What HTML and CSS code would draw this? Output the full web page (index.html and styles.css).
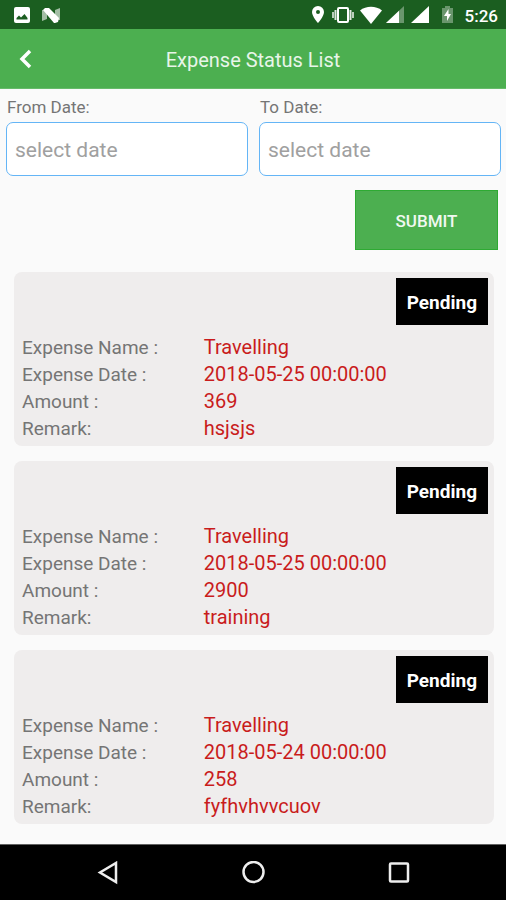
FILE: index.html
```html
<!DOCTYPE html>
<html lang="en">
<head>
<meta charset="utf-8">
<meta name="viewport" content="width=device-width, initial-scale=1">
<title>Expense Status List</title>
<link rel="stylesheet" href="styles.css">
</head>
<body>
<div class="status-bar">
  <div class="status-group">
    <svg width="16" height="16" viewBox="0 0 16 16"><rect width="16" height="16" rx="2" fill="#fff"/><path d="M2.500 12.500V11L5 8.500 7 10.500 10.500 7 13.500 11v1.500z" fill="#1b5e20"/></svg>
    <svg class="logo-n" width="18" height="16" viewBox="0 0 18 16"><path d="M0 3h5v9l-5 2zM18 1v12h-5V3z" fill="#fff" opacity=".6"/><path d="M1 3L3 1h4l10 10-1 4-3 1h-1z" fill="#fff"/></svg>
  </div>
  <div class="status-group status-right">
    <svg width="12" height="17" viewBox="0 0 12 17"><path fill="#fff" fill-rule="evenodd" d="M6 0a6 6 0 0 0-6 6c0 4.500 6 11 6 11s6-6.500 6-11a6 6 0 0 0-6-6zm0 4a2 2 0 1 1 0 4 2 2 0 0 1 0-4z"/></svg>
    <svg class="vibrate" width="22" height="18" viewBox="0 0 22 18" fill="none" stroke="#fff"><rect x="6" y="2" width="10" height="14" rx="1" stroke-width="2"/><path d="M3.500 4v10M18.500 4v10" stroke-width="2" opacity=".85"/><path d="M1 6v6M21 6v6" stroke-width="2" opacity=".7"/></svg>
    <svg class="wifi" width="22" height="18" viewBox="0 0 22 18"><path fill="#fff" d="M0 4.500C6-.5 16-.5 22 4.500L11 18z"/></svg>
    <svg class="signal" width="18" height="17" viewBox="0 0 18 17"><path d="M0 17L18 0v17z" fill="#fff" opacity=".35"/><path d="M0 17L13 4.700V17z" fill="#fff"/></svg>
    <svg class="signal-full" width="18" height="17" viewBox="0 0 18 17"><path d="M0 17L18 0v17z" fill="#fff"/></svg>
    <svg class="battery" width="11" height="17" viewBox="0 0 11 17"><path d="M3 0h5v2h3v15H0V2h3z" fill="#fff" opacity=".35"/><path d="M6.500 3L2 10h3v5l4-7H6.500z" fill="#fff"/></svg>
    <span class="clock">5:26</span>
  </div>
</div>
<header class="app-bar">
  <button class="back" type="button" aria-label="Back"><svg width="14" height="20" viewBox="0 0 14 20"><path d="M11 2L3 10l8 8" fill="none" stroke="#fff" stroke-width="3.500"/></svg></button>
  <h1>Expense Status List</h1>
</header>
<main>
  <form>
    <div class="fields">
      <div class="field"><label for="from">From Date:</label><input id="from" type="text" placeholder="select date"></div>
      <div class="field"><label for="to">To Date:</label><input id="to" type="text" placeholder="select date"></div>
    </div>
    <button class="submit" type="button">SUBMIT</button>
  </form>
  <section class="cards">
    <article class="card">
      <span class="badge">Pending</span>
      <dl>
        <dt>Expense Name :</dt><dd>Travelling</dd>
        <dt>Expense Date :</dt><dd>2018-05-25 00:00:00</dd>
        <dt>Amount :</dt><dd>369</dd>
        <dt>Remark:</dt><dd>hsjsjs</dd>
      </dl>
    </article>
    <article class="card">
      <span class="badge">Pending</span>
      <dl>
        <dt>Expense Name :</dt><dd>Travelling</dd>
        <dt>Expense Date :</dt><dd>2018-05-25 00:00:00</dd>
        <dt>Amount :</dt><dd>2900</dd>
        <dt>Remark:</dt><dd>training</dd>
      </dl>
    </article>
    <article class="card">
      <span class="badge">Pending</span>
      <dl>
        <dt>Expense Name :</dt><dd>Travelling</dd>
        <dt>Expense Date :</dt><dd>2018-05-24 00:00:00</dd>
        <dt>Amount :</dt><dd>258</dd>
        <dt>Remark:</dt><dd>fyfhvhvvcuov</dd>
      </dl>
    </article>
  </section>
</main>
<nav class="nav-bar">
  <button type="button" aria-label="Back"><svg width="24" height="24" viewBox="0 0 24 24"><path d="M21 2v19L5 11.500z"/></svg></button>
  <button type="button" aria-label="Home"><svg width="24" height="24" viewBox="0 0 24 24"><circle cx="12.500" cy="11" r="10"/></svg></button>
  <button type="button" aria-label="Recent apps"><svg width="24" height="24" viewBox="0 0 24 24"><rect x="3" y="2.500" width="18" height="18" rx="1"/></svg></button>
</nav>
</body>
</html>
```
FILE: styles.css
```css
* {
  box-sizing: border-box;
}

body {
  margin: 0;
  min-height: 100vh;
  display: flex;
  flex-direction: column;
  background: #fafafa;
  color: #757575;
  font-family: Roboto, "Liberation Sans", sans-serif;
}

svg {
  display: block;
}

button {
  border: 0;
  padding: 0;
  background: none;
  font-family: inherit;
}

.status-bar {
  display: flex;
  justify-content: space-between;
  align-items: center;
  height: 29px;
  padding: 0 8px 0 14px;
  background: #1b5e20;
  color: #fff;
}

.status-group {
  display: flex;
  align-items: center;
}

.logo-n {
  margin-left: 12px;
}

.vibrate {
  margin-left: 8px;
}

.wifi {
  margin-left: 6px;
}

.signal {
  margin-left: 4px;
}

.signal-full {
  margin-left: 7px;
}

.battery {
  margin-left: 13px;
}

.clock {
  margin-left: 12px;
  padding-top: 3px;
  font-size: 17px;
  font-weight: 500;
  line-height: 20px;
}

.app-bar {
  display: grid;
  grid-template-columns: 52px 1fr 52px;
  align-items: center;
  height: 60px;
  background: #4caf50;
  border-bottom: 1px solid #66bb6a;
}

.back {
  display: flex;
  align-items: center;
  justify-content: center;
  height: 100%;
}

h1 {
  margin: 0;
  padding-top: 3px;
  color: #e8f5e9;
  font-size: 20px;
  font-weight: 400;
  line-height: 24px;
  text-align: center;
}

main {
  flex: 1;
  padding-bottom: 20px;
}

form {
  display: flex;
  flex-direction: column;
  padding: 8px 5px 0 6px;
}

.fields {
  display: grid;
  grid-template-columns: 1fr 1fr;
  gap: 11px;
}

.field {
  display: flex;
  flex-direction: column;
  gap: 5px;
}

label {
  padding-left: 1px;
  font-size: 17px;
  line-height: 20px;
}

input {
  width: 100%;
  height: 54px;
  padding: 2px 8px 0;
  border: 1px solid #64b5f6;
  border-radius: 7px;
  background: #fff;
  color: #757575;
  font-family: inherit;
  font-size: 21px;
}

input::placeholder {
  color: #a0a0a0;
  opacity: 1;
}

.submit {
  align-self: flex-end;
  width: 143px;
  height: 60px;
  margin: 14px 3px 0 0;
  padding-top: 2px;
  border: 1px solid #2eaa33;
  background: #4caf50;
  color: #f1f8f1;
  font-size: 17px;
  font-weight: 500;
}

.cards {
  display: flex;
  flex-direction: column;
  gap: 15px;
  padding: 22px 12px 0 14px;
}

.card {
  display: flex;
  flex-direction: column;
  padding: 6px 6px 4px 8px;
  border-radius: 8px;
  background: #efeded;
}

.badge {
  align-self: flex-end;
  padding: 13px 11px 10px;
  background: #000;
  color: #fff;
  font-size: 19px;
  font-weight: 700;
  line-height: 24px;
}

dl {
  display: grid;
  grid-template-columns: 39% 1fr;
  margin: 9px 0 0;
  font-size: 19px;
  line-height: 27px;
}

dd {
  margin: 0;
  color: #c91c1c;
  font-size: 20px;
}

.nav-bar {
  display: flex;
  justify-content: center;
  align-items: center;
  gap: 122px;
  height: 57px;
  border-top: 1px solid #616161;
  background: #000;
}

.nav-bar svg {
  fill: none;
  stroke: #eee;
  stroke-width: 2.5;
}
```
